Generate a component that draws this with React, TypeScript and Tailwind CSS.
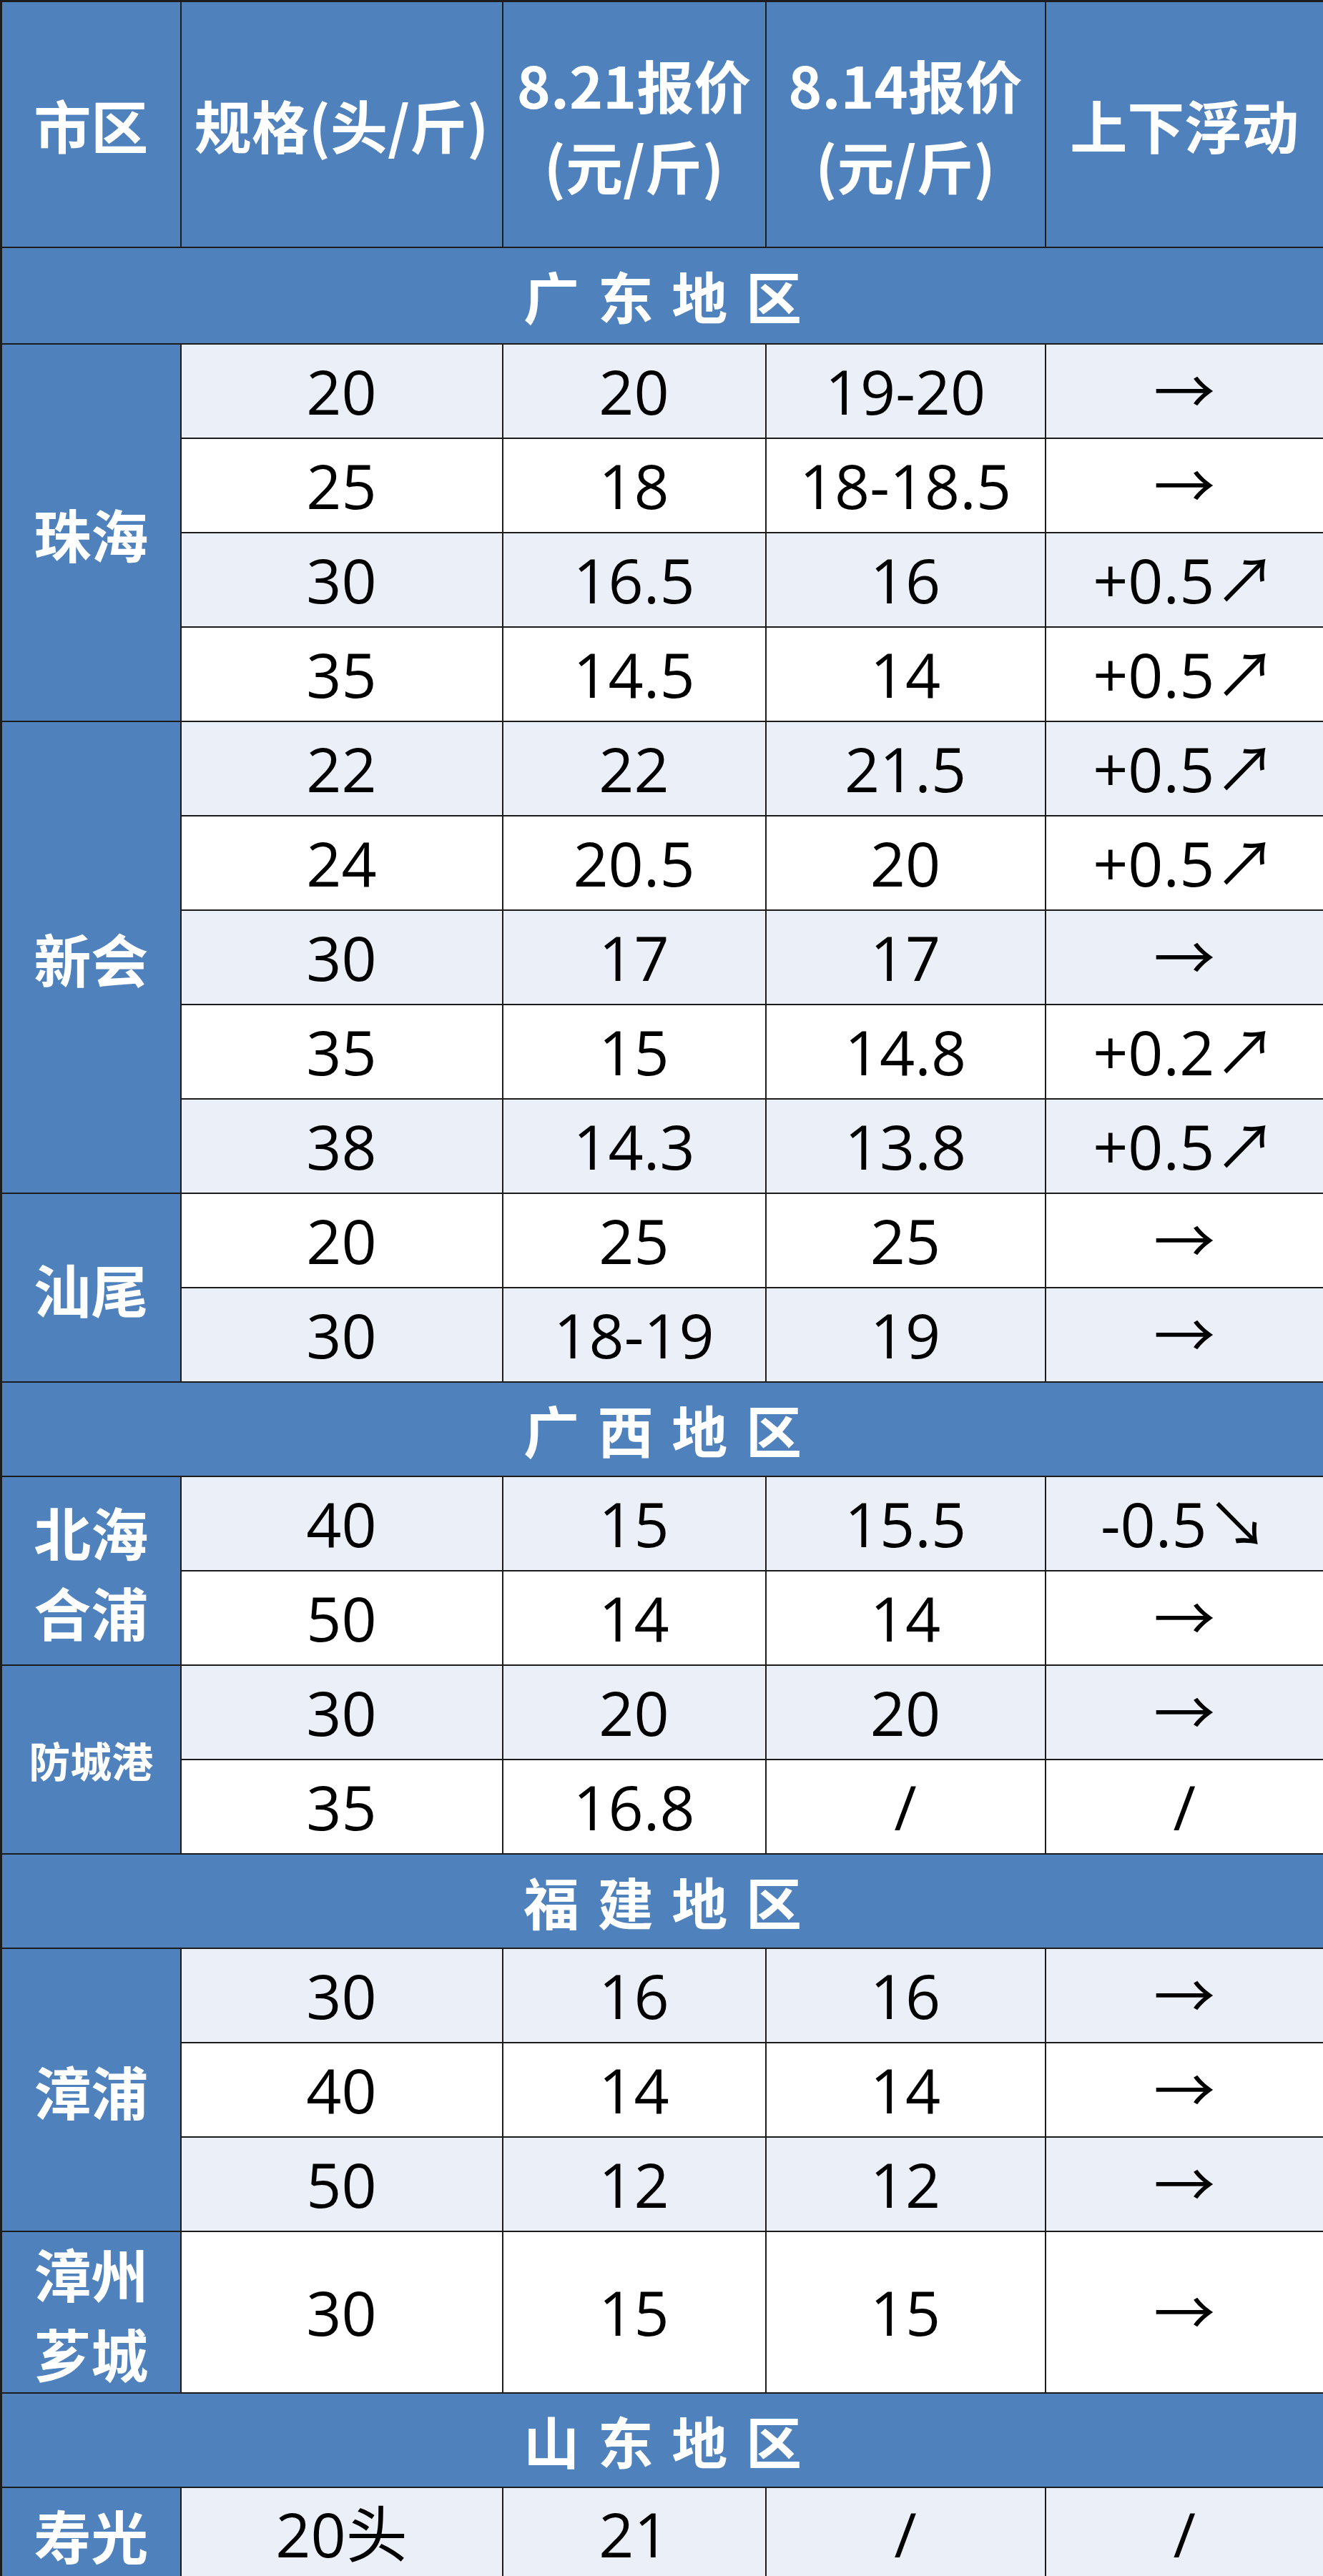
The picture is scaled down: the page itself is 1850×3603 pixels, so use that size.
import React from 'react';

type Group = {
  label: string[];
  small?: boolean;
  tall?: boolean;
  rows: string[][];
};

type Section = {
  name: string;
  first?: boolean;
  groups: Group[];
};

const sections: Section[] = [
  {
    name: '广 东 地 区',
    first: true,
    groups: [
      {
        label: ['珠海'],
        rows: [
          ['20', '20', '19-20', '→'],
          ['25', '18', '18-18.5', '→'],
          ['30', '16.5', '16', '+0.5↗'],
          ['35', '14.5', '14', '+0.5↗'],
        ],
      },
      {
        label: ['新会'],
        rows: [
          ['22', '22', '21.5', '+0.5↗'],
          ['24', '20.5', '20', '+0.5↗'],
          ['30', '17', '17', '→'],
          ['35', '15', '14.8', '+0.2↗'],
          ['38', '14.3', '13.8', '+0.5↗'],
        ],
      },
      {
        label: ['汕尾'],
        rows: [
          ['20', '25', '25', '→'],
          ['30', '18-19', '19', '→'],
        ],
      },
    ],
  },
  {
    name: '广 西 地 区',
    groups: [
      {
        label: ['北海', '合浦'],
        rows: [
          ['40', '15', '15.5', '-0.5↘'],
          ['50', '14', '14', '→'],
        ],
      },
      {
        label: ['防城港'],
        small: true,
        rows: [
          ['30', '20', '20', '→'],
          ['35', '16.8', '/', '/'],
        ],
      },
    ],
  },
  {
    name: '福 建 地 区',
    groups: [
      {
        label: ['漳浦'],
        rows: [
          ['30', '16', '16', '→'],
          ['40', '14', '14', '→'],
          ['50', '12', '12', '→'],
        ],
      },
      {
        label: ['漳州', '芗城'],
        tall: true,
        rows: [['30', '15', '15', '→']],
      },
    ],
  },
  {
    name: '山 东 地 区',
    groups: [{ label: ['寿光'], rows: [['20头', '21', '/', '/']] }],
  },
];

const cjk = { fontFamily: '"Noto Sans CJK SC", "Noto Sans", sans-serif' };
const nums = { fontFamily: '"Open Sans", "Noto Sans CJK SC", sans-serif' };

const HeadCell = ({ lines }: { lines: string[] }) => (
  <th className="border-2 border-[#1c1c1c] bg-[#4f81bd] p-0 text-center align-middle text-[80px] font-bold leading-[113px] text-white">
    {lines.map((l) => (
      <div key={l}>{l}</div>
    ))}
  </th>
);

export default function App() {
  return (
    <div className="w-[1850px] bg-white" style={cjk}>
      <table className="w-[1850px] table-fixed border-collapse border-[3px] border-[#1c1c1c]">
        <colgroup>
          <col className="w-[251px]" />
          <col className="w-[450px]" />
          <col className="w-[368px]" />
          <col className="w-[391px]" />
          <col className="w-[390px]" />
        </colgroup>
        <thead>
          <tr className="h-[344px]">
            <HeadCell lines={['市区']} />
            <HeadCell lines={['规格(头/斤)']} />
            <HeadCell lines={['8.21报价', '(元/斤)']} />
            <HeadCell lines={['8.14报价', '(元/斤)']} />
            <HeadCell lines={['上下浮动']} />
          </tr>
        </thead>
        <tbody>
          {sections.map((section) => {
            let stripe = 0;
            return (
              <React.Fragment key={section.name}>
                <tr className={section.first ? 'h-[135px]' : 'h-[132px]'}>
                  <td
                    colSpan={5}
                    className="border-2 border-[#1c1c1c] bg-[#4f81bd] p-0 pl-[4px] text-center align-middle text-[78px] font-bold leading-none tracking-[4px] text-white whitespace-pre"
                  >
                    {section.name}
                  </td>
                </tr>
                {section.groups.map((group) =>
                  group.rows.map((row, i) => {
                    const light = stripe++ % 2 === 0;
                    return (
                      <tr
                        key={group.label.join('') + i}
                        className={group.tall ? 'h-[219px]' : 'h-[132px]'}
                      >
                        {i === 0 && (
                          <td
                            rowSpan={group.rows.length}
                            className={`border-2 border-[#1c1c1c] bg-[#4f81bd] p-0 text-center align-middle font-bold text-white ${
                              group.small ? 'text-[58px] leading-[70px]' : 'text-[80px] leading-[112px]'
                            }`}
                          >
                            {group.label.map((l) => (
                              <div key={l}>{l}</div>
                            ))}
                          </td>
                        )}
                        {row.map((v, j) => (
                          <td
                            key={j}
                            style={nums}
                            className={`border-2 border-[#1c1c1c] p-0 text-center align-middle text-[86px] leading-none text-black ${
                              light ? 'bg-[#ebf0f8]' : 'bg-white'
                            }`}
                          >
                            {v}
                          </td>
                        ))}
                      </tr>
                    );
                  })
                )}
              </React.Fragment>
            );
          })}
        </tbody>
      </table>
    </div>
  );
}
